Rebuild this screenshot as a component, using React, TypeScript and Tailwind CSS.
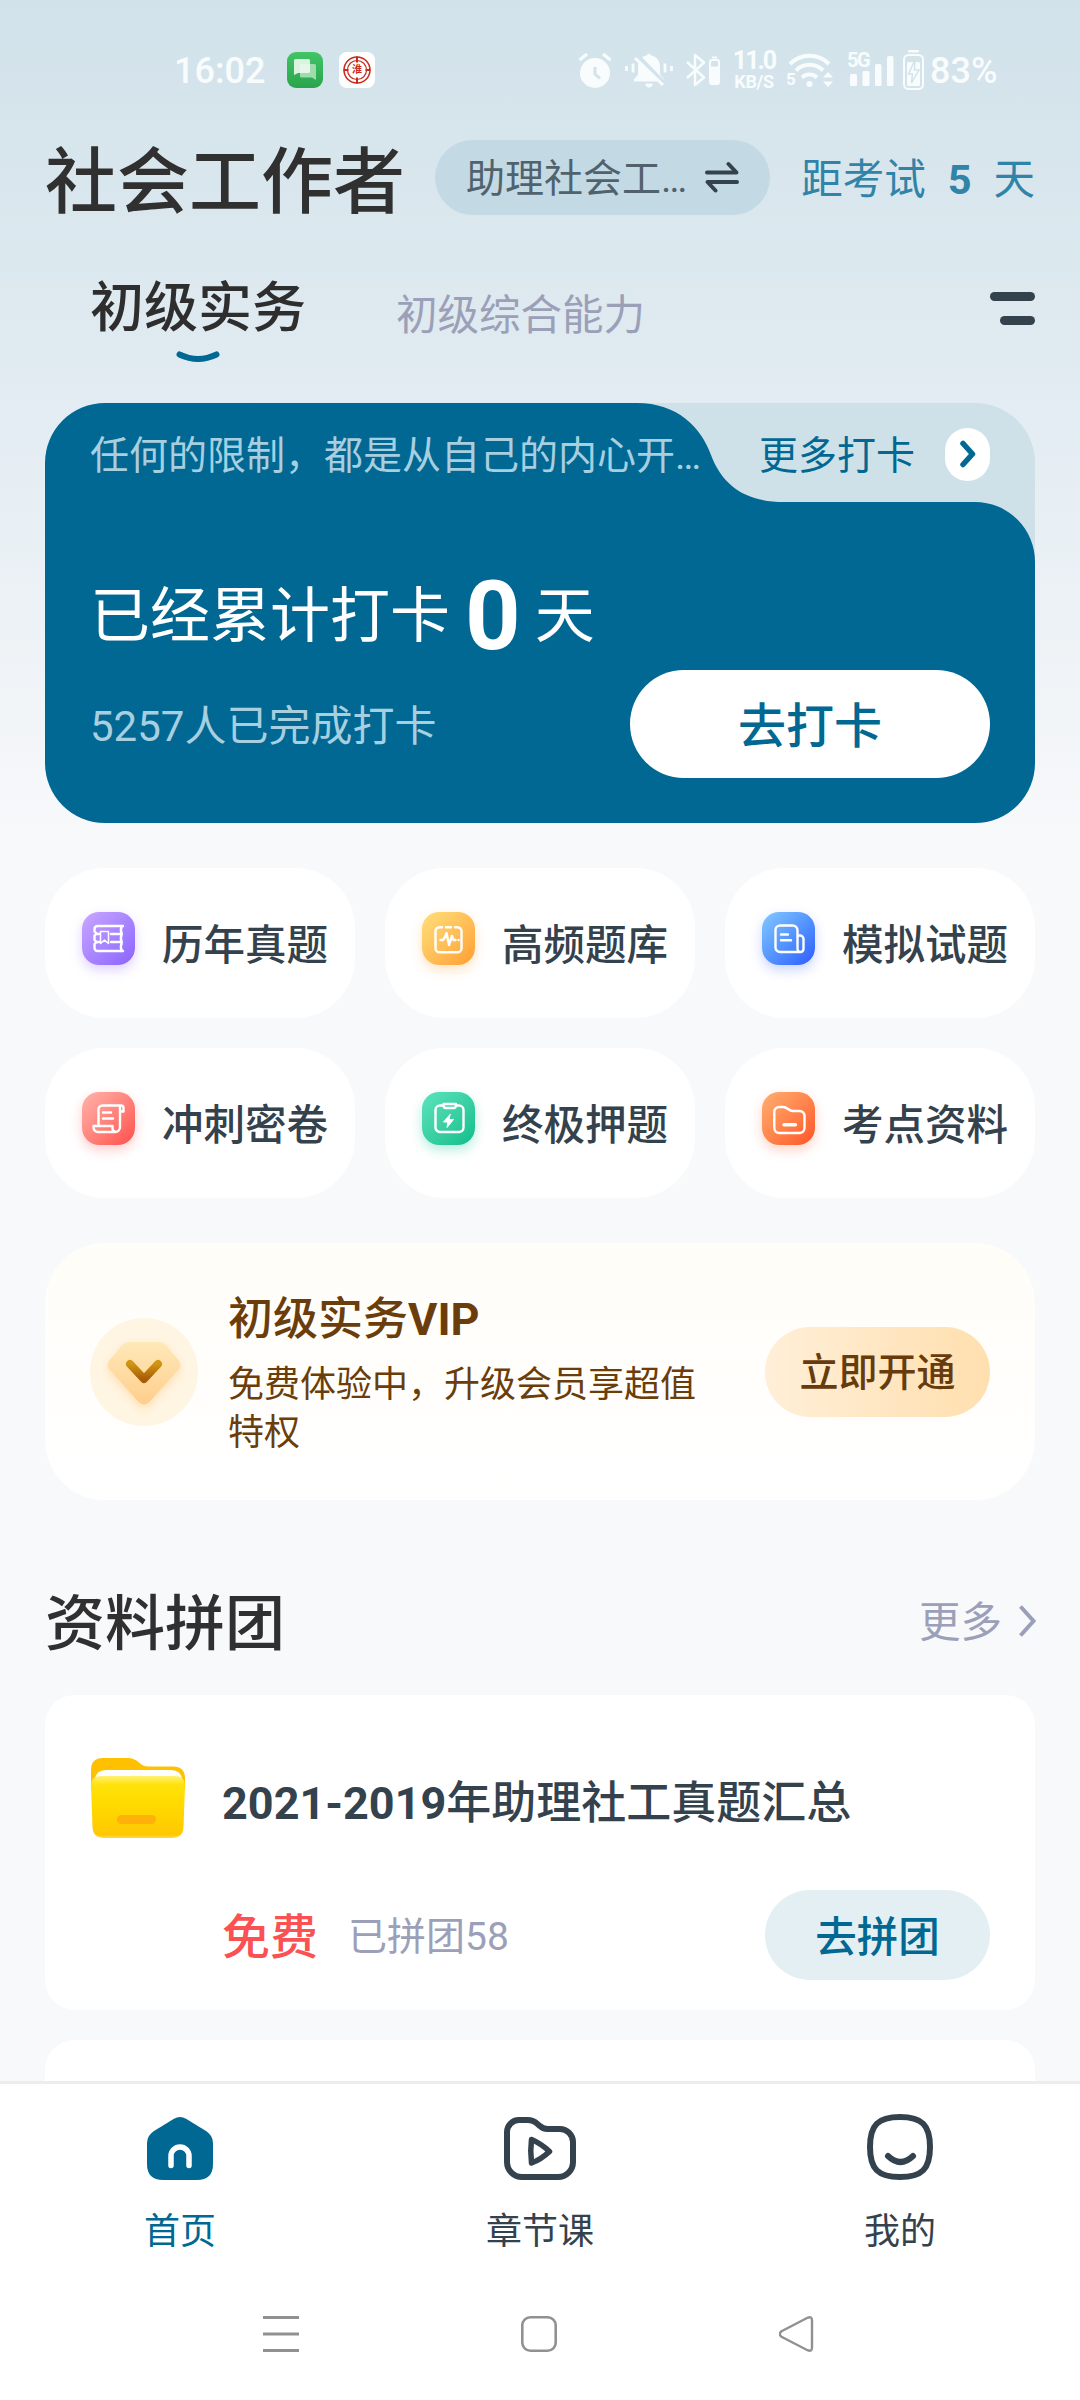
import { ReactNode } from 'react';

// Types
type Feature = {
  title: string;
  tile: string; // Tailwind classes for the gradient and glow
  icon: ReactNode;
};

type NavItem = {
  label: string;
  icon: ReactNode;
  active?: boolean;
};

// Configuration
const FEATURES: Feature[] = [
  {
    title: '历年真题',
    tile: 'from-[#caa6ff] to-[#8c62ff] shadow-[0_5px_12px_rgba(140,98,255,0.28)]',
    icon: (
      <>
        <path d="M41 14H15.5a3 3 0 0 0-3 3v2.5l2 2-2 2v4.5l2 2-2 2V36a3 3 0 0 0 3 3H41" />
        <path d="M39.8 14q-1.8 4 0 8.3q-2 4 0 8.2q-1.8 4 0 8.5M29 22h10.5M29 30h10.5M14 22h3M14 30h3" />
        <path d="M18.5 19.5h8v12l-4-3.4-4 3.4z" strokeWidth="1.5" />
      </>
    ),
  },
  {
    title: '高频题库',
    tile: 'from-[#ffe07a] to-[#ff9e30] shadow-[0_5px_12px_rgba(255,158,48,0.28)]',
    icon: (
      <>
        <path d="M20 15.2h-2.500a4 4 0 0 0-4 4v17a4 4 0 0 0 4 4h18a4 4 0 0 0 4-4v-17a4 4 0 0 0-4-4h-2.500M24 15.200h5" />
        <path d="M18.500 28h2.500l2-3 1.500-4 2.500 12 3-9 1.500 4h2M36.500 28h.1" />
      </>
    ),
  },
  {
    title: '模拟试题',
    tile: 'from-[#86c8ff] to-[#3159ff] shadow-[0_5px_12px_rgba(49,89,255,0.25)]',
    icon: (
      <>
        <path d="M38.500 40H18a4.500 4.500 0 0 1-4.500-4.500V18a4.500 4.500 0 0 1 4.500-4.500h12.500a5 5 0 0 1 5 5V37a3 3 0 0 0 6 0V27a3.500 3.500 0 0 0-3.500-3.500h-2.500" />
        <path d="M19 22.500h7M19 28.300h10" />
      </>
    ),
  },
  {
    title: '冲刺密卷',
    tile: 'from-[#ffb3ac] to-[#ff4b4b] shadow-[0_5px_12px_rgba(255,75,75,0.28)]',
    icon: (
      <>
        <path d="M16.500 33V17.500a4 4 0 0 1 4-4h18.500a2.500 2.500 0 0 1 2.500 2.500v3.500h-3.500" />
        <path d="M38 14.500V35a5 5 0 0 1-5 5H16a4.500 4.500 0 0 1-4.500-4.500V34H30.500v2a4 4 0 0 0 3 4" />
        <path d="M21 20.500h8M21 26.500h10" />
      </>
    ),
  },
  {
    title: '终极押题',
    tile: 'from-[#5be3bd] to-[#00be8c] shadow-[0_5px_12px_rgba(0,190,140,0.28)]',
    icon: (
      <>
        <path d="M20.500 13.500h-2.500a4.500 4.500 0 0 0-4.500 4.500v17.500a4.500 4.500 0 0 0 4.500 4.500h19a4.500 4.500 0 0 0 4.500-4.500V18a4.500 4.500 0 0 0-4.500-4.500h-2.500" />
        <path d="M21.500 12h12.500v1.500a2.500 2.500 0 0 1-2.500 2.500h-7.500a2.500 2.500 0 0 1-2.500-2.500z" />
        <path d="M28 22.500l-6.500 7.500h4.300l-.8 5.500 6.500-8h-4.200z" fill="#fff" strokeWidth="1" />
      </>
    ),
  },
  {
    title: '考点资料',
    tile: 'from-[#ffaf70] to-[#ff5224] shadow-[0_5px_12px_rgba(255,82,36,0.25)]',
    icon: (
      <>
        <path d="M12.300 20a5 5 0 0 1 5-5h3.700c2 0 3.500.8 5 2s3 2 5 2h6.500a5 5 0 0 1 5 5v12a5 5 0 0 1-5 5h-20.200a5 5 0 0 1-5-5z" />
        <path d="M22 32.700h11.500" strokeWidth="3.400" />
      </>
    ),
  },
];

const NAV_ITEMS: NavItem[] = [
  {
    label: '首页',
    active: true,
    icon: (
      <svg width="66" height="63" viewBox="0 0 66 63">
        <path
          d="M27 1.700q6-3.400 12 0L59 14q7 4.500 7 12v21q0 16-16 16H16Q0 63 0 47V26q0-7.500 7-12z"
          fill="#006892"
        />
        <path
          d="M24 48.500V39a9 9 0 0 1 18 0v9.500"
          fill="none"
          stroke="#fff"
          strokeWidth="5.500"
          strokeLinecap="round"
        />
      </svg>
    ),
  },
  {
    label: '章节课',
    icon: (
      <svg
        width="72"
        height="63"
        viewBox="0 0 72 63"
        fill="none"
        stroke="#34424d"
        strokeWidth="6"
        strokeLinejoin="round"
      >
        <path d="M3 15A12 12 0 0 1 15 3h8.500c4 0 7.500 1.500 10 4l2 1.700c2.200 2.200 5 3.300 8 3.300H56a13 13 0 0 1 13 13v20a15 15 0 0 1-15 15H18A15 15 0 0 1 3 45z" />
        <path d="M27.500 22.500q9.500 4 18 12q-8.500 8-18 11.500q-1.500-11.500 0-23.500z" strokeWidth="5.500" />
      </svg>
    ),
  },
  {
    label: '我的',
    icon: (
      <svg
        width="66"
        height="66"
        viewBox="0 0 66 66"
        fill="none"
        stroke="#34424d"
        strokeWidth="6"
        strokeLinecap="round"
      >
        <path d="M33 3C55 3 63 11 63 33S55 63 33 63 3 55 3 33 11 3 33 3z" />
        <path d="M21 42q12.500 12 25 0" />
      </svg>
    ),
  },
];

export default function App() {
  return (
    <div className="flex h-[2400px] w-[1080px] flex-col overflow-hidden bg-[#f8f9fb] font-[Roboto,'Noto_Sans_CJK_SC',sans-serif] leading-none text-[#34424d]">
      <main className="h-[2081px] overflow-hidden bg-[linear-gradient(180deg,#d1e2ea_0px,#d7e5ec_140px,#e2ecf2_400px,#edf2f6_620px,#f8f9fb_850px)]">
        <StatusBar />
        <Header />
        <SubjectTabs />
        <div className="px-[45px]">
          <CheckInCard />
          <div className="mt-[45px] grid grid-cols-3 gap-[30px]">
            {FEATURES.map((feature) => (
              <FeatureCard key={feature.title} feature={feature} />
            ))}
          </div>
          <VipBanner />
          <GroupBuy />
        </div>
      </main>
      <BottomNav />
      <SystemNav />
    </div>
  );
}

function StatusBar() {
  return (
    <div className="flex h-[140px] items-center pl-[174px] text-[#f8fcfd]">
      <span className="w-[113px] pt-[2px] text-[36px] font-medium">16:02</span>
      <svg className="mr-[16px]" width="36" height="36" viewBox="0 0 36 36">
        <defs>
          <linearGradient id="chat" x1="0" y1="0" x2="0" y2="1">
            <stop offset="0" stopColor="#41c566" />
            <stop offset="1" stopColor="#2aa44c" />
          </linearGradient>
        </defs>
        <rect width="36" height="36" rx="9" fill="url(#chat)" />
        <path d="M13 12h14.500q1.500 0 1.500 1.500V28l-4-2.500H14.500q-1.500 0-1.500-1.500z" fill="#9edcae" />
        <path d="M8.500 7h13Q23 7 23 8.500v11q0 1.500-1.500 1.500H11l-4 2V8.500Q7 7 8.500 7z" fill="#ecfaef" opacity=".9" />
      </svg>
      <div className="relative flex h-[36px] w-[36px] items-center justify-center rounded-[8px] bg-white">
        <svg className="absolute inset-0" width="36" height="36" fill="none" stroke="#c92a1c">
          <circle cx="18" cy="18" r="13" strokeWidth="1.500" />
          <circle cx="18" cy="18" r="9.500" strokeWidth="1.200" />
          <path d="M18 4.500v6M18 25.500v6M4.500 18h5M26.500 18h5" strokeWidth="2" />
        </svg>
        <span className="text-[10px] font-bold text-[#c92a1c]">淮</span>
      </div>

      {/* Alarm */}
      <svg className="ml-[203px]" width="34" height="36" viewBox="0 0 34 36">
        <circle cx="17" cy="21" r="15" fill="currentColor" />
        <path d="M1.500 8L9 2M32.500 8L25 2" stroke="currentColor" strokeWidth="3.200" />
        <path d="M17 15v7l5 4.500" fill="none" stroke="#d3e3eb" strokeWidth="3" />
      </svg>
      {/* Muted bell */}
      <svg className="ml-[13px]" width="48" height="36" viewBox="0 0 48 36">
        <path
          d="M9 27.500l4-5v-8C13 8 17 4.500 21.500 3.500Q24 0 26.500 3.500C31 4.500 35 8 35 14.500v8l4 5v2H9z"
          fill="currentColor"
        />
        <path d="M20 31.500h8q-1 4-4 4t-4-4z" fill="currentColor" />
        <path d="M12 3l27 28" stroke="#d3e3eb" strokeWidth="4" />
        <path d="M10 6l28 27" stroke="currentColor" strokeWidth="3" />
        <path d="M1.500 14v5M8 11.500v9M46.500 14v5M40 11.500v9" stroke="currentColor" strokeWidth="2.800" />
      </svg>
      {/* Bluetooth with device battery */}
      <svg className="ml-[13px]" width="34" height="36" viewBox="0 0 34 36">
        <path
          d="M1 10l17 15.500-9 7.500V3l9 7.500L1 26"
          fill="none"
          stroke="currentColor"
          strokeWidth="2.500"
          strokeLinejoin="round"
        />
        <rect x="24" y="8" width="9" height="24" rx="2" fill="none" stroke="currentColor" strokeWidth="2" />
        <path d="M24 14.500h9V32h-9zM26 4.500h5v2h-5z" fill="currentColor" />
      </svg>
      <div className="ml-[12px] flex h-[38px] w-[44px] flex-col items-center font-bold">
        <span className="text-[25px] leading-[20px] tracking-[-2px]">11.0</span>
        <span className="mt-[2px] text-[18px] leading-[18px] tracking-[-0.3px]">KB/S</span>
      </div>
      {/* Wi-Fi */}
      <div className="relative ml-[11px] h-[36px] w-[47px]">
        <svg width="47" height="36" viewBox="0 0 47 36" fill="none" stroke="currentColor" strokeWidth="4">
          <path d="M3 12a27 27 0 0 1 39 0M9 18.500a19 19 0 0 1 27 0M15 25.500a11 11 0 0 1 15 0" />
          <circle cx="22.500" cy="32" r="3" fill="currentColor" stroke="none" />
          <path d="M36 25.500l5-5.500 5 5.500zM36 29.500l5 5.500 5-5.500z" fill="currentColor" stroke="none" />
        </svg>
        <span className="absolute bottom-0 -left-px text-[17px] font-bold">5</span>
      </div>
      {/* Cell signal */}
      <div className="relative ml-[13px] h-[36px] w-[47px]">
        <svg width="47" height="36" viewBox="0 0 47 36" fill="currentColor">
          <rect x="3" y="22" width="7" height="12" rx="1.500" />
          <rect x="15.500" y="19" width="7" height="15" rx="1.500" />
          <rect x="28" y="12" width="6.500" height="22" rx="1.500" />
          <rect x="40" y="4" width="6.500" height="30" rx="1.500" />
        </svg>
        <span className="absolute -top-[2px] left-0 text-[20px] font-bold tracking-[-1.5px]">5G</span>
      </div>
      {/* Battery */}
      <svg className="ml-[9px]" width="21" height="40" viewBox="0 0 21 40">
        <rect x="1" y="5" width="19" height="34" rx="4.500" fill="none" stroke="currentColor" strokeWidth="2" />
        <rect x="5" y="0" width="11" height="2.500" rx="1" fill="currentColor" />
        <rect x="4" y="12" width="13" height="24" rx="1.500" fill="currentColor" />
        <path d="M12 10L5.500 24h4l-1 9L16 20h-4.500z" fill="#f8fcfd" stroke="#d3e3eb" strokeWidth="1.500" />
      </svg>
      <span className="ml-[6px] pt-[2px] text-[36px] font-medium">83%</span>
    </div>
  );
}

function Header() {
  return (
    <div className="flex h-[75px] items-center pr-[45px] pl-[45px]">
      <h1 className="w-[390px] pt-[10px] text-[72px] font-medium text-[#303030]">社会工作者</h1>
      <button className="flex h-[75px] w-[335px] items-center rounded-full bg-[#c3dae5] pl-[31px]">
        <span className="w-[239px] pt-[4px] text-left text-[39px] text-[#51626d]">助理社会工…</span>
        <svg
          className="mb-[2px]"
          width="34"
          height="32"
          viewBox="0 0 34 32"
          fill="none"
          stroke="#34424d"
          strokeWidth="4"
          strokeLinecap="round"
          strokeLinejoin="round"
        >
          <path d="M2 11.500h29.500L23.500 3M32 21H2.500l8 8.500" />
        </svg>
      </button>
      <div className="ml-auto flex items-center gap-[22px] pt-[5px] text-[41.500px] text-[#3084a8]">
        <span>距考试</span>
        <span className="font-bold">5</span>
        <span>天</span>
      </div>
    </div>
  );
}

function SubjectTabs() {
  return (
    <div className="flex h-[188px] items-start pr-[45px] pl-[90px]">
      <div className="flex flex-col items-center pt-[67px]">
        <span className="text-[54px] font-medium text-[#2e2e2e]">初级实务</span>
        <svg className="mt-[15px]" width="44" height="12" viewBox="0 0 44 12">
          <path d="M3.500 3.500q18.500 9 37 0" fill="none" stroke="#006892" strokeWidth="6" strokeLinecap="round" />
        </svg>
      </div>
      <span className="mt-[80px] ml-[90px] text-[41.500px] text-[#9ba0b8]">初级综合能力</span>
      <div className="mt-[77px] ml-auto flex flex-col items-end gap-[15px]">
        <span className="h-[9px] w-[45px] rounded-full bg-[#34424d]" />
        <span className="h-[9px] w-[35px] rounded-full bg-[#34424d]" />
      </div>
    </div>
  );
}

function CheckInCard() {
  return (
    <section className="relative h-[420px]">
      {/* Folder shaped background */}
      <svg className="absolute inset-0" width="990" height="420" viewBox="0 0 990 420">
        <path d="M500 0h430a60 60 0 0 1 60 60v140H500z" fill="#cee1e8" />
        <path
          d="M60 0H592C632 0 656 24 666 52C678 84 702 99 739 99H930a60 60 0 0 1 60 60V360a60 60 0 0 1-60 60H60a60 60 0 0 1-60-60V60A60 60 0 0 1 60 0z"
          fill="#006892"
        />
      </svg>
      <div className="relative flex h-full flex-col pr-[45px] pl-[45px]">
        <div className="flex h-[102px] items-center text-[39px]">
          <p className="w-[669px] pt-[5px] text-[#a8cfe0]">任何的限制，都是从自己的内心开…</p>
          <span className="pt-[5px] text-[#006892]">更多打卡</span>
          <span className="ml-auto flex h-[53px] w-[45px] items-center justify-center rounded-full bg-white">
            <svg width="17" height="28" viewBox="0 0 17 28" fill="none" stroke="#006892" strokeWidth="5.500">
              <path d="M4 3.500L13.500 14 4 24.500" strokeLinecap="round" strokeLinejoin="round" />
            </svg>
          </span>
        </div>
        <div className="mt-[63px] flex items-center text-[60px] text-white">
          <span>已经累计打卡</span>
          <span className="ml-[15px] text-[97px] font-bold">0</span>
          <span className="ml-[14px]">天</span>
        </div>
        <div className="mt-[5px] flex h-[108px] items-center justify-between">
          <span className="pt-[5px] text-[42px] text-[#a8cfe0]">5257人已完成打卡</span>
          <button className="h-[108px] w-[360px] rounded-full bg-white pt-[5px] text-[48px] font-medium text-[#006892]">
            去打卡
          </button>
        </div>
      </div>
    </section>
  );
}

function FeatureCard({ feature }: { feature: Feature }) {
  return (
    <div className="flex h-[150px] items-center rounded-[60px] bg-white pl-[37px]">
      <div className={`mb-[10px] h-[53px] w-[53px] rounded-[17px] bg-linear-to-br ${feature.tile}`}>
        <svg
          width="53"
          height="53"
          viewBox="0 0 53 53"
          fill="none"
          stroke="#fff"
          strokeWidth="2.400"
          strokeLinecap="round"
          strokeLinejoin="round"
        >
          {feature.icon}
        </svg>
      </div>
      <span className="mt-[6px] ml-[27px] text-[41.500px] font-medium">{feature.title}</span>
    </div>
  );
}

function VipBanner() {
  return (
    <section className="mt-[45px] flex h-[257px] items-center rounded-[60px] bg-linear-to-b from-[#fffdf8] to-white px-[45px]">
      <svg width="108" height="108" viewBox="0 0 108 108">
        <defs>
          <linearGradient id="gem" x1="0" y1="0" x2="0" y2="1">
            <stop offset="0" stopColor="#ffe8b8" />
            <stop offset="1" stopColor="#ffce8c" />
          </linearGradient>
          <linearGradient id="gem-mark" x1="0" y1="0" x2="0" y2="1">
            <stop offset="0" stopColor="#d09512" />
            <stop offset="1" stopColor="#a85c08" />
          </linearGradient>
          <filter id="gem-glow" x="-30%" y="-30%" width="160%" height="160%">
            <feDropShadow dx="0" dy="4" stdDeviation="5" floodColor="#ffc87c" floodOpacity=".45" />
          </filter>
        </defs>
        <circle cx="54" cy="54" r="54" fill="#fff5e3" />
        <path
          d="M39 24h30q4 0 7 3l13 16q3 4.500 0 8L59 84.500q-5 4-10 0L19 51q-3-3.500 0-8l13-16q3-3 7-3z"
          fill="url(#gem)"
          filter="url(#gem-glow)"
        />
        <path
          d="M40 46l14 15 14-15"
          fill="none"
          stroke="url(#gem-mark)"
          strokeWidth="8"
          strokeLinecap="round"
          strokeLinejoin="round"
        />
      </svg>
      <div className="ml-[30px] w-[480px] pt-[11px] text-[#6b3d0a]">
        <h2 className="text-[45px] font-medium">
          初级实务<span className="font-bold">VIP</span>
        </h2>
        <p className="mt-[19px] text-[36px] leading-[48px]">免费体验中，升级会员享超值特权</p>
      </div>
      <button className="ml-auto h-[90px] w-[225px] rounded-full bg-linear-to-r from-[#ffefd8] to-[#ffdfae] pt-[4px] text-[39px] font-medium text-[#673b0c]">
        立即开通
      </button>
    </section>
  );
}

function GroupBuy() {
  return (
    <section>
      <div className="flex h-[195px] items-center justify-between pt-[46px]">
        <h2 className="pt-[8px] text-[60px] font-medium text-[#303030]">资料拼团</h2>
        <span className="flex items-center text-[41.500px] text-[#9ba0b8]">
          <span className="pt-[4px]">更多</span>
          <svg className="mr-[-1px] ml-[16px]" width="18" height="34" viewBox="0 0 18 34">
            <path d="M2.500 2.500L15.500 17 2.500 31.500" fill="none" stroke="#9ba0b8" strokeWidth="4" />
          </svg>
        </span>
      </div>

      <article className="h-[315px] rounded-[30px] bg-white px-[45px] pt-[61px]">
        <div className="flex items-center">
          <FolderIcon />
          <h3 className="ml-[36px] pt-[6px] text-[45px] font-medium">
            <span className="font-bold">2021-2019</span>年助理社工真题汇总
          </h3>
        </div>
        <div className="mt-[46px] flex items-center pl-[132px]">
          <span className="pt-[5px] text-[48px] font-medium text-[#fb5153]">免费</span>
          <span className="ml-[30px] pt-[5px] text-[39px] text-[#9ba0b8]">已拼团58</span>
          <button className="ml-auto h-[90px] w-[225px] rounded-full bg-[#e4eff3] pt-[5px] text-[41.500px] font-medium text-[#006892]">
            去拼团
          </button>
        </div>
      </article>
      <article className="mt-[30px] h-[315px] rounded-[30px] bg-white" />
    </section>
  );
}

function FolderIcon() {
  return (
    <svg width="96" height="88" viewBox="0 0 96 88">
      <defs>
        <linearGradient id="folder" x1="0" y1="0" x2="0" y2="1">
          <stop offset="0" stopColor="#fff176" />
          <stop offset=".14" stopColor="#ffe20c" />
          <stop offset=".4" stopColor="#ffdc00" />
          <stop offset=".94" stopColor="#ffc800" />
          <stop offset="1" stopColor="#ffd846" />
        </linearGradient>
      </defs>
      <path d="M1 30V14Q1 2 13 2H38q6 0 11 4.500q4 4 9 4H83q12 0 12 12V34H1z" fill="#ffc000" />
      <path d="M5 30v-5q0-11 11-11H81q11 0 11 11v6z" fill="#fff" />
      <path d="M1 30q0-10 10-10H85q10 0 10 10l-1.500 41q-.5 11-12 11h-67q-11.500 0-12-11z" fill="url(#folder)" />
      <rect x="27" y="59" width="39" height="9" rx="4.500" fill="#ffb00a" />
    </svg>
  );
}

function BottomNav() {
  return (
    <nav className="flex h-[179px] border-t-[3px] border-[#ededed] bg-white">
      {NAV_ITEMS.map(({ label, icon, active }) => (
        <div key={label} className="flex flex-1 flex-col items-center">
          <div className="flex h-[96px] items-end">{icon}</div>
          <span className={`mt-[34px] text-[36px] ${active ? 'text-[#006892]' : 'text-[#34424d]'}`}>{label}</span>
        </div>
      ))}
    </nav>
  );
}

function SystemNav() {
  return (
    <div className="flex h-[140px] items-start bg-white pt-[56px] pl-[263px]">
      <svg width="36" height="36" stroke="#919191" strokeWidth="3">
        <path d="M0 1.500h36M0 18h36M0 34.500h36" />
      </svg>
      <svg className="ml-[222px]" width="36" height="36" fill="none" stroke="#919191" strokeWidth="2.600">
        <rect x="1.300" y="1.300" width="33.400" height="33.400" rx="8" />
      </svg>
      <svg className="ml-[222px]" width="36" height="36" fill="none" stroke="#919191" strokeWidth="2.400">
        <path d="M2.500 15.300L28.500 1.800q4.500-1.800 4.500 2.500v27.400q0 4.300-4.500 2.500L2.500 20.700q-3.500-2.700 0-5.400z" />
      </svg>
    </div>
  );
}
